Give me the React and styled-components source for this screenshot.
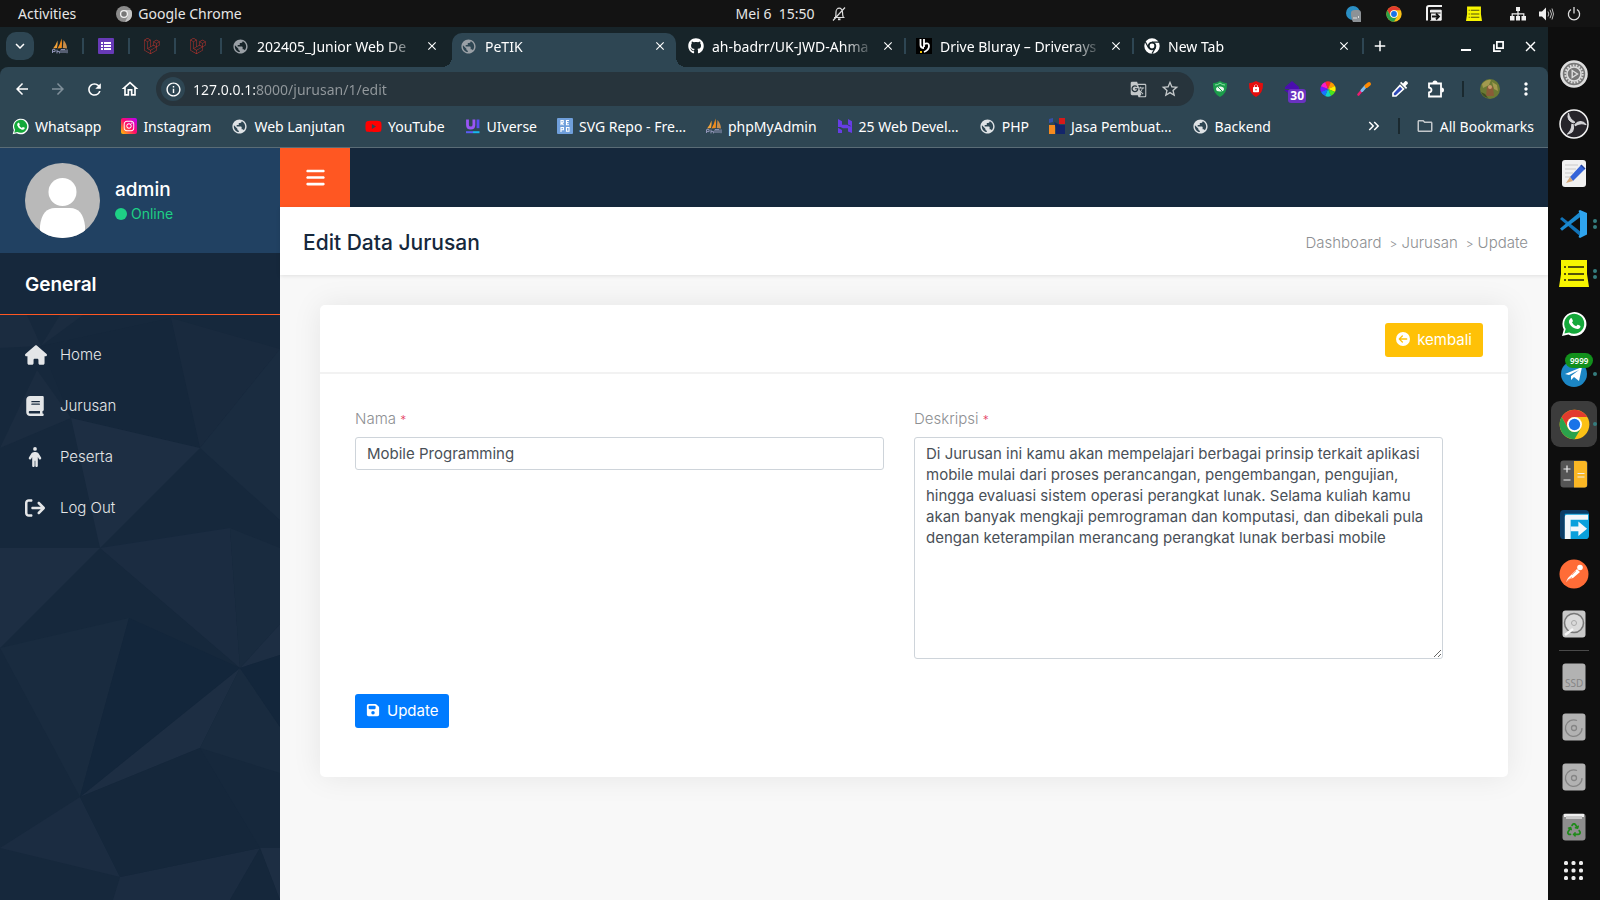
import React from 'react';
import styled, { createGlobalStyle } from 'styled-components';
import {
  FaArrowRightFromBracket,
  FaBars,
  FaBook,
  FaCircleArrowLeft,
  FaFloppyDisk,
  FaGithub,
  FaHouse,
  FaInstagram,
  FaPerson,
  FaRecycle,
  FaYoutube,
} from 'react-icons/fa6';
import {
  MdAdd,
  MdArrowBack,
  MdArrowForward,
  MdClose,
  MdGTranslate,
  MdInfoOutline,
  MdKeyboardArrowDown,
  MdKeyboardDoubleArrowRight,
  MdLock,
  MdMoreVert,
  MdOutlineFolder,
  MdOutlineHome,
  MdPublic,
  MdRefresh,
  MdStarBorder,
} from 'react-icons/md';
import { SiLaravel } from 'react-icons/si';

const description =
  'Di Jurusan ini kamu akan mempelajari berbagai prinsip terkait aplikasi mobile mulai dari proses perancangan, pengembangan, pengujian, hingga evaluasi sistem operasi perangkat lunak. Selama kuliah kamu akan banyak mengkaji pemrograman dan komputasi, dan dibekali pula dengan keterampilan merancang perangkat lunak berbasi mobile';

/* ---------- drawings ---------- */

function ChromeLogo({ size = 16 }) {
  return (
    <svg width={size} height={size} viewBox="0 0 48 48">
      <circle cx="24" cy="24" r="23" fill="#fbc116" />
      <path d="M4.1 12.5A23 23 0 0 1 43.9 12.5H24A11.5 11.5 0 0 0 14 29.8Z" fill="#e33b2e" />
      <path d="M4.1 12.5 14 29.8A11.5 11.5 0 0 0 34 29.8L24 47A23 23 0 0 1 4.1 12.5Z" fill="#2ba24c" />
      <circle cx="24" cy="24" r="11.5" fill="#fff" />
      <circle cx="24" cy="24" r="8.8" fill="#1a73e8" />
    </svg>
  );
}

function ChromeGray() {
  return (
    <svg width="16" height="16" viewBox="0 0 16 16">
      <circle cx="8" cy="8" r="8" fill="#8b8b8b" />
      <path d="M8 4h7a8 8 0 0 1-6 12l3-6z" fill="#c4c4c4" />
      <circle cx="8" cy="8" r="3.4" fill="#777" stroke="#f1f1f1" strokeWidth="1.3" />
    </svg>
  );
}

function ChromeMono() {
  return (
    <svg width="16" height="16" viewBox="0 0 16 16" fill="none" stroke="#fff">
      <circle cx="8" cy="8" r="6" strokeWidth="3.4" />
      <circle cx="8" cy="8" r="2.4" fill="#fff" stroke="none" />
      <path d="M8 4.2h7M4.7 10 1.4 4M11.3 10 8 15.6" stroke="#172429" strokeWidth="1.2" />
    </svg>
  );
}

function Sails() {
  return (
    <svg width="16" height="16" viewBox="0 0 16 16">
      <path d="M5.5 2.5Q4 7 1 10.5L5 10Q6 6 5.5 2.5Z" fill="#f2a33a" />
      <path d="M9.5.5Q8 7 5.5 10.5L9.8 10Q10.4 5 9.5.5Z" fill="#f08c1c" />
      <path d="M11.5 2Q15 6 15 10.5L10.8 10Z" fill="#c98d49" />
      <path d="M.5 15v-3.4h2.6v2H.6M5 15.4v-3.8M5 13.4h2.4v2M9 15v-3.4h2v3.4M11 11.6h2v3.4M15 11.4v3.8" fill="none" stroke="#9296b8" strokeWidth="1" />
    </svg>
  );
}

function FormsIcon() {
  return (
    <svg width="16" height="16" viewBox="0 0 16 16">
      <rect width="16" height="16" rx="1" fill="#673ab7" />
      <path d="M3 4h2v2H3zM6 4h7v2H6zM3 7h2v2H3zM6 7h7v2H6zM3 10h2v2H3zM6 10h7v2H6z" fill="#fff" />
    </svg>
  );
}

function BlurayIcon() {
  return (
    <svg width="16" height="16" viewBox="0 0 16 16">
      <rect width="16" height="16" fill="#000" />
      <path d="M4.5 1v6q0 3 3.5 3M8 1v8M8 6q5-2 5 2t-5 6" fill="none" stroke="#fff" strokeWidth="1.8" />
      <rect x="4" y="13" width="2" height="2" fill="#f7c600" />
    </svg>
  );
}

function UiverseIcon() {
  return (
    <svg width="16" height="16" viewBox="0 0 16 16" fill="none">
      <path d="M2.5 1.5v5.4q0 3.100 3.200 3.100t3.200-3.100V1.500" stroke="#9a55f5" strokeWidth="2.8" />
      <path d="M13 1.5v8.700" stroke="#5a4bf0" strokeWidth="2.8" />
      <path d="M1 14.200h7" stroke="#5a5cf5" strokeWidth="2" />
      <path d="M8 14.200h6.500" stroke="#19b7ee" strokeWidth="2" />
    </svg>
  );
}

function RepoIcon() {
  return (
    <svg width="16" height="16" viewBox="0 0 16 16">
      <rect width="16" height="16" rx="1" fill="#6f9fdb" />
      <path
        d="M4 7.200V2.500h2.200v2.300H4.500l2 2.400M12 2.500H9.500v4.200H12M9.500 4.600h2M4 14V9.500h2.400v2.300H4M9.500 9.500H12v3.800H9.500z"
        fill="none"
        stroke="#fff"
        strokeWidth="1.1"
      />
    </svg>
  );
}

function HIcon() {
  return (
    <svg width="16" height="16" viewBox="0 0 16 16" fill="#673de6">
      <path d="M1 7V1l4 2.2v3.6h5l4 2.2H1zM11 6.4V1l4 2.2V8.4zM1 15V9.8L5 12v3zM11 13.6v-3.400H6L2 8.200h13V15z" />
    </svg>
  );
}

function JasaIcon() {
  return (
    <svg width="16" height="16" viewBox="0 0 16 16">
      <path d="M0 1l4-1v4l-4 1z" fill="#3550a8" />
      <rect x="10" y="0" width="6" height="6" fill="#d61a1a" />
      <rect x="0" y="7" width="6" height="9" fill="#f78b1f" />
      <path d="M5 4l6 3h5v9H7v-6z" fill="#14266b" />
    </svg>
  );
}

function InstagramBadge() {
  return (
    <svg width="16" height="16" viewBox="0 0 16 16">
      <defs>
        <linearGradient id="ig" x1="0" y1="1" x2="1" y2="0">
          <stop offset="0" stopColor="#ffc800" />
          <stop offset="0.5" stopColor="#ff0a6c" />
          <stop offset="1" stopColor="#b400ff" />
        </linearGradient>
      </defs>
      <rect width="16" height="16" rx="2" fill="url(#ig)" />
      <FaInstagram x="2" y="2" size={12} color="#fff" />
    </svg>
  );
}

function WhatsappLogo({ size = 16 }) {
  return (
    <svg width={size} height={size} viewBox="0 0 26 26">
      <path d="M1 25l1.8-6.4A12 12 0 1 1 7.4 23.4z" fill="#fff" />
      <path d="M3.4 22.6l1.3-4.6A10 10 0 1 1 8.2 21.4z" fill="#14a83a" />
      <path
        d="M9.400 7.400q1-.8 1.600.4l.9 2q.2.6-.9 1.700 1.600 2.900 4.200 3.800l1.300-1.500q.4-.4 2.600.9.8.4.1 1.800-1.600 2.400-5 1.100-5-2-6.300-6.400-.2-2.400 1.500-3.800z"
        fill="#fff"
      />
    </svg>
  );
}

function MutedBell() {
  return (
    <svg width="14" height="14" viewBox="0 0 14 14" fill="none" stroke="#ddd" strokeWidth="1.2">
      <path d="M2 10.500h10.500M3.500 10.500Q4 8 4 5a3 3.500 0 0 1 6.500 0q0 3 .8 5.500M1 13.500 13 .5" />
      <path d="M6 12.300h2.500" strokeWidth="1.800" />
    </svg>
  );
}

function DownloadTray() {
  return (
    <svg width="16" height="17" viewBox="0 0 16 17" fill="none" stroke="#f2f2f2">
      <path d="M1 15.500V3q0-2 2-2h13" strokeWidth="2" />
      <path d="M4.500 5.200H15.200v10H4.500z" fill="#f2f2f2" strokeWidth="1" />
      <path d="M4.500 15V8h10" stroke="#131313" strokeWidth="1.200" />
      <path d="M6 11.500h6M10 8.500l3 3-3 3" stroke="#131313" strokeWidth="1.800" />
    </svg>
  );
}

function DownloadIcon() {
  return (
    <svg width="29" height="29" viewBox="0 0 30 30">
      <rect width="30" height="30" rx="4" fill="#0c3c66" />
      <path d="M5 4h25v22q0 4-4 4H5z" fill="#0aa0dc" />
      <path d="M5 30V7q0-2 2-2h22v5H11v20z" fill="#f4f7fa" />
      <path d="M11 17h8v-5l9 7.500-9 7.500v-5h-8z" fill="#f4f7fa" />
    </svg>
  );
}

function NotesIcon({ size = 14 }) {
  return (
    <svg width={size} height={size} viewBox="0 0 30 28">
      <path d="M2 0h26v14l2 13H0l2-13z" fill="#f7f500" />
      <path d="M5 7h2M9 7h16M5 14h2M9 14h16M5 20h2M9 20h16" stroke="#55530a" strokeWidth="2" />
    </svg>
  );
}

function NetworkIcon() {
  return (
    <svg width="16" height="14" viewBox="0 0 16 14" fill="#eee">
      <path d="M6 0h4v4H6zM0 9h4.500v4.500H0zM11.500 9H16v4.500h-4.500zM6 9h4v4.500H6z" />
      <path d="M8 4v5M2.200 9.500V6.800h11.600v2.700" fill="none" stroke="#eee" strokeWidth="1.200" />
    </svg>
  );
}

function VolumeIcon() {
  return (
    <svg width="15" height="14" viewBox="0 0 15 14" fill="#eee">
      <path d="M0 4.500h3L7 .5v13L3 9.500H0z" />
      <path d="M9 4.500q1.600 2.500 0 5M11 2.800q3 4.200 0 8.400M13 1.500q3 5.500 0 11" fill="none" stroke="#bbb" />
    </svg>
  );
}

function PowerIcon() {
  return (
    <svg width="14" height="14" viewBox="0 0 14 14" fill="none" stroke="#ddd" strokeWidth="1.300">
      <path d="M4 2.500a5.600 5.600 0 1 0 6 0M7 0v6.500" />
    </svg>
  );
}

function TrayApp() {
  return (
    <svg width="16" height="16" viewBox="0 0 16 16">
      <circle cx="7" cy="7" r="7" fill="#2b8fc4" />
      <path d="M5 7q0-3 4-3h3q3 0 3 3v9H7q-2-3-2-9z" fill="#8d9296" />
      <path d="M7 12h4M12.500 10v2" stroke="#ddd" />
    </svg>
  );
}

function Shield({ color, children }) {
  return (
    <svg width="16" height="16" viewBox="0 0 16 16">
      <path d="M8 0q3 2 7 2.200Q15.500 12 8 16 .5 12 1 2.200 5 2 8 0z" fill={color} />
      {children}
    </svg>
  );
}

function ColorWheel() {
  const colors = ['#ff2a2a', '#ff9900', '#ffee00', '#4be31c', '#12d6c4', '#1677ff', '#6a1cff', '#ff1cc4'];
  return (
    <svg width="16" height="16" viewBox="-8 -8 16 16">
      {colors.map((color, i) => (
        <path key={color} d="M0 0 3-7A7.500 7.500 0 0 0-3-7z" fill={color} transform={`rotate(${i * 45})`} />
      ))}
    </svg>
  );
}

function BrushIcon() {
  return (
    <svg width="16" height="16" viewBox="0 0 16 16" strokeLinecap="round">
      <path d="M2.500 13.500l3-3.500" stroke="#ee1c70" strokeWidth="2.600" />
      <path d="M6 9.500l3.500-4" stroke="#7fbef0" strokeWidth="3" />
      <path d="M10.500 5 13 3" stroke="#ff8a00" strokeWidth="4" />
    </svg>
  );
}

function PickerIcon() {
  return (
    <svg width="18" height="18" viewBox="0 0 18 18">
      <path d="M2 16v-3l7-7.500 3.500 3.500L5 16z" fill="#2f49b8" stroke="#fff" strokeWidth="1.700" />
      <path d="M9 3l6 6 1.200-1.200-1.700-1.800L17 3.500Q17 .8 14.300 1L12 3.500 10.200 1.800z" fill="#fff" />
    </svg>
  );
}

function PuzzleIcon() {
  return (
    <svg width="18" height="18" viewBox="0 0 18 18">
      <path d="M2 3.500h12v13H2v-4q2.500-.5 2.500-2.500T2 7.500z" fill="none" stroke="#fff" strokeWidth="1.800" />
      <path d="M5.500 3a2.500 2.500 0 0 1 5 0zM14.500 7.500a2.500 2.500 0 0 1 0 5z" fill="#fff" />
    </svg>
  );
}

function ProfilePhoto() {
  return (
    <svg width="20" height="20" viewBox="0 0 20 20">
      <circle cx="10" cy="10" r="10" fill="#6b7a34" />
      <path d="M2 5q5-5 9-4l-2 5-6 3zM12 3l5 3 1 6-4-2z" fill="#a39a4f" />
      <path d="M7 8q3-3 6 0l1 9H6z" fill="#8a5b38" />
      <path d="M1 13l4 2 3 4q-5-1-7-6z" fill="#3e4f22" />
      <circle cx="10" cy="8" r="2" fill="#c79a6c" />
    </svg>
  );
}

function CounterMark() {
  return (
    <svg width="18" height="18" viewBox="0 0 18 18" fill="#4a0eae">
      <path d="M9 1 16 7v2H2V7zM1 10h8v6z" />
    </svg>
  );
}

function GearIcon() {
  return (
    <svg width="28" height="28" viewBox="0 0 28 28" fill="none">
      <circle cx="14" cy="14" r="12.500" fill="#777" stroke="#dedede" strokeWidth="2.600" />
      <circle cx="14" cy="14" r="8.600" stroke="#ddd" strokeWidth="2" strokeDasharray="1.700 1.300" />
      <circle cx="14" cy="14" r="7" stroke="#ddd" strokeWidth="1.600" />
      <path d="M12.200 10.500 17.500 14l-5.300 3.500z" stroke="#ddd" strokeWidth="1.400" />
    </svg>
  );
}

function ObsIcon() {
  return (
    <svg width="30" height="30" viewBox="-15 -15 30 30">
      <circle r="14" fill="#26242a" stroke="#f2f2f2" strokeWidth="1.500" />
      {[0, 120, 240].map((angle) => (
        <path key={angle} d="M0-1Q-8-3-5.500-11-4.500-5 .8-2z" fill="#d5d5d8" stroke="#d5d5d8" transform={`rotate(${angle})`} />
      ))}
    </svg>
  );
}

function EditorIcon() {
  return (
    <svg width="26" height="28" viewBox="0 0 26 28">
      <rect x="1" y="0" width="24" height="27" rx="3" fill="#f1f1f1" />
      <path d="M4 5h13M4 9h11M4 13h8M4 17h6" stroke="#c9c9c9" strokeWidth="1.200" />
      <path d="M9 17 20 5l4 4-12 12z" fill="#3564d8" />
      <path d="M9 17l3 4-7 2z" fill="#d6a878" />
      <path d="M20 5l4 4" stroke="#1f3f9c" strokeWidth="1.500" />
    </svg>
  );
}

function VscodeIcon() {
  return (
    <svg width="28" height="28" viewBox="0 0 28 28">
      <path d="M0 9l2-2 19 15v5z" fill="#1173b8" />
      <path d="M0 18.500l2 2.200L21 6.500V1z" fill="#1b8ad0" />
      <path d="M20 0l7 3v21.500L20 28l-1.500-1 1.500-3V4l-1.500-3z" fill="#2fa4ee" />
    </svg>
  );
}

function TelegramIcon() {
  return (
    <svg width="28" height="28" viewBox="0 0 28 28">
      <circle cx="14" cy="14" r="13" fill="#1c86c4" />
      <path d="M5 14 22 7l-3 14-5-4-3 3v-4l8-6-10 5z" fill="#fff" />
    </svg>
  );
}

function CalculatorIcon() {
  return (
    <svg width="28" height="28" viewBox="0 0 28 28">
      <rect x="0.500" y="0.500" width="27" height="27" rx="3" fill="#555" />
      <path d="M14 1h10.500a2.500 2.500 0 0 1 2.500 2.500V25a2.500 2.500 0 0 1-2.500 2.500H14z" fill="#fbb724" />
      <path d="M3.500 9h7M7 5.500v7M3.500 20h7M17.500 13.500h7M17.500 17h7" stroke="#eee" strokeWidth="1.200" />
    </svg>
  );
}

function PostmanIcon() {
  return (
    <svg width="30" height="30" viewBox="0 0 30 30">
      <circle cx="15" cy="15" r="14.500" fill="#ff6c37" />
      <circle cx="21" cy="8.500" r="2.800" fill="#fff" />
      <path d="M11 17l7-7 3 3-7 6-4 1-3 3 2-4z" fill="#fff" />
      <path d="M7 23l6-5M17 12l-4 4" stroke="#ff9d78" strokeWidth="0.800" />
    </svg>
  );
}

function DiskIcon({ kind }) {
  return (
    <svg width="24" height="28" viewBox="0 0 24 28" fill="none">
      <rect x="0.500" y="0.500" width="23" height="27" rx="3" fill={kind === 'hdd' ? '#c9c9c9' : '#b2b2b2'} />
      {kind === 'hdd' && (
        <>
          <circle cx="12" cy="13" r="9.500" fill="#dadada" stroke="#777" strokeWidth="1.500" />
          <circle cx="12" cy="13" r="2.500" stroke="#aaa" />
          <path d="M3 25l8-6" stroke="#f6f6f6" strokeWidth="2.500" />
        </>
      )}
      {kind === 'ssd' && (
        <text x="3" y="24" fill="#858585" fontFamily="Noto Sans" fontSize="10">
          SSD
        </text>
      )}
      {kind === 'disc' && (
        <>
          <path d="M15 7.500A8.300 8.300 0 1 0 20 15" stroke="#858585" strokeWidth="1.300" />
          <circle cx="12" cy="15" r="2.500" stroke="#858585" strokeWidth="1.300" />
        </>
      )}
    </svg>
  );
}

function TrashIcon() {
  return (
    <svg width="24" height="28" viewBox="0 0 24 28">
      <rect x="0.500" y="0.500" width="23" height="27" rx="3" fill="#8e8e8e" />
      <path d="M2 1h20v3H2z" fill="#eee" />
      <path d="M4 3h16v3H4z" fill="#c9c9c9" />
      <FaRecycle x="5" y="10" size={14} color="#1f8a1a" />
    </svg>
  );
}

function AppsGrid() {
  return (
    <svg width="20" height="20" viewBox="0 0 20 20" fill="#eee">
      {[0, 7.5, 15].map((y) => [0, 7.5, 15].map((x) => <rect key={`${x}-${y}`} x={x} y={y} width="4" height="4" rx="1.5" />))}
    </svg>
  );
}

function RestoreIcon() {
  return (
    <svg width="11" height="11" viewBox="0 0 12 12" fill="none" stroke="#fff" strokeWidth="1.900">
      <path d="M4.200 1h6.800v6.800H4.200zM1 3.500V11h7.500" />
    </svg>
  );
}

function Facets() {
  return (
    <FacetSvg viewBox="0 315 280 585" preserveAspectRatio="xMinYMin slice" aria-hidden="true">
      <path d="M0 315H27L41 346 0 348ZM60 315H83L41 346ZM0 448 37 370 71 418Z" fill="#1b2c40" />
      <path d="M41 346 171 318 200 448 71 418Z" fill="#15273b" />
      <path d="M171 318 280 349 200 448Z" fill="#192a3e" />
      <path d="M200 448 280 349V520Z" fill="#1a2c40" />
      <path d="M71 418 200 448 100 548ZM0 548H100L0 648ZM240 668 280 624V655ZM240 668 80 797 200 748ZM260 848H280V900Z" fill="#1d2e43" />
      <path d="M100 548 230 528 240 668ZM80 797 0 848 120 877ZM120 877 260 848 230 900H113Z" fill="#1b2c41" />
      <path d="M230 528 280 548V624L240 668ZM0 648 129 618 80 797ZM240 668 280 727V773L200 748Z" fill="#192b3f" />
      <path d="M129 618 240 668 80 797ZM240 668 280 655V727Z" fill="#13263b" />
      <path d="M80 797 200 748 260 848 120 877ZM230 900 260 848 280 900Z" fill="#15273b" />
    </FacetSvg>
  );
}

/* ---------- data ---------- */

const pinned = [
  { name: 'phpMyAdmin', icon: <Sails /> },
  { name: 'Forms', icon: <FormsIcon /> },
  { name: 'Laravel', icon: <SiLaravel size={16} color="#c2332d" /> },
  { name: 'Laravel docs', icon: <SiLaravel size={16} color="#c2332d" /> },
];

const tabs = [
  { title: '202405_Junior Web De', icon: <MdPublic size={17} color="#9aa0a6" /> },
  { title: 'PeTIK', icon: <MdPublic size={17} color="#9aa0a6" />, active: true },
  { title: 'ah-badrr/UK-JWD-Ahma', icon: <FaGithub size={16} color="#fff" /> },
  { title: 'Drive Bluray – Driverays', icon: <BlurayIcon />, line: true },
  { title: 'New Tab', icon: <ChromeMono />, line: true },
];

const globe = <MdPublic size={17} color="#dfe3e6" />;

const bookmarks = [
  { label: 'Whatsapp', icon: <WhatsappLogo size={17} /> },
  { label: 'Instagram', icon: <InstagramBadge /> },
  { label: 'Web Lanjutan', icon: globe },
  { label: 'YouTube', icon: <FaYoutube size={17} color="#f00" /> },
  { label: 'UIverse', icon: <UiverseIcon /> },
  { label: 'SVG Repo - Fre…', icon: <RepoIcon /> },
  { label: 'phpMyAdmin', icon: <Sails /> },
  { label: '25 Web Devel…', icon: <HIcon /> },
  { label: 'PHP', icon: globe },
  { label: 'Jasa Pembuat…', icon: <JasaIcon /> },
  { label: 'Backend', icon: globe },
];

const menu = [
  { label: 'Home', icon: <FaHouse size={22} /> },
  { label: 'Jurusan', icon: <FaBook size={20} /> },
  { label: 'Peserta', icon: <FaPerson size={20} /> },
  { label: 'Log Out', icon: <FaArrowRightFromBracket size={20} /> },
];

const dockApps = [
  { name: 'Settings', icon: <GearIcon /> },
  { name: 'OBS Studio', icon: <ObsIcon /> },
  { name: 'Text Editor', icon: <EditorIcon /> },
  { name: 'Code', icon: <VscodeIcon />, dots: 2 },
  { name: 'Notes', icon: <NotesIcon size={30} />, dots: 2 },
  { name: 'WhatsApp', icon: <WhatsappLogo size={26} /> },
  { name: 'Telegram', icon: <TelegramIcon />, dots: 1, badge: '9999' },
  { name: 'Chrome', icon: <ChromeLogo size={31} />, dots: 1, active: true },
  { name: 'Calculator', icon: <CalculatorIcon /> },
  { name: 'Free Download Manager', icon: <DownloadIcon /> },
  { name: 'Postman', icon: <PostmanIcon /> },
  { name: 'Disks', icon: <DiskIcon kind="hdd" /> },
];

const dockDrives = [
  { name: 'SSD', icon: <DiskIcon kind="ssd" /> },
  { name: 'Volume 1', icon: <DiskIcon kind="disc" /> },
  { name: 'Volume 2', icon: <DiskIcon kind="disc" /> },
  { name: 'Trash', icon: <TrashIcon /> },
];

/* ---------- parts ---------- */

function SystemBar() {
  return (
    <SystemBarDiv>
      <SystemGroup>
        <SystemButton>Activities</SystemButton>
        <SystemButton>
          <ChromeGray />
          Google Chrome
        </SystemButton>
      </SystemGroup>
      <ClockButton>
        <span>Mei 6&nbsp; 15:50</span>
        <MutedBell />
      </ClockButton>
      <TrayDiv>
        <TrayApps>
          <TrayApp />
          <ChromeLogo size={16} />
          <DownloadTray />
          <NotesIcon size={16} />
        </TrayApps>
        <TrayStatus>
          <NetworkIcon />
          <VolumeIcon />
          <PowerIcon />
        </TrayStatus>
      </TrayDiv>
    </SystemBarDiv>
  );
}

function TabStrip() {
  return (
    <TabStripDiv>
      <TabSearch aria-label="Search tabs">
        <MdKeyboardArrowDown size={18} />
      </TabSearch>
      {pinned.map((tab) => (
        <PinnedTab key={tab.name} aria-label={tab.name}>
          {tab.icon}
        </PinnedTab>
      ))}
      {tabs.map((tab) => (
        <TabDiv key={tab.title} $active={tab.active} $line={tab.line}>
          <TabButton>
            {tab.icon}
            <TabTitle>{tab.title}</TabTitle>
          </TabButton>
          <IconButton $size={18} aria-label={`Close ${tab.title}`}>
            <MdClose size={14} />
          </IconButton>
        </TabDiv>
      ))}
      <NewTabLine />
      <IconButton $size={32} aria-label="New tab">
        <MdAdd size={18} />
      </IconButton>
      <WindowControls>
        <IconButton $size={32} aria-label="Minimize">
          <MinimizeMark />
        </IconButton>
        <IconButton $size={32} aria-label="Restore">
          <RestoreIcon />
        </IconButton>
        <IconButton $size={32} aria-label="Close window">
          <MdClose size={17} />
        </IconButton>
      </WindowControls>
    </TabStripDiv>
  );
}

function Toolbar() {
  return (
    <ToolbarDiv>
      <NavButtons>
        <IconButton $size={36} aria-label="Back">
          <MdArrowBack size={18} />
        </IconButton>
        <IconButton $size={36} $dim aria-label="Forward">
          <MdArrowForward size={18} />
        </IconButton>
        <IconButton $size={36} aria-label="Reload">
          <MdRefresh size={19} />
        </IconButton>
        <IconButton $size={36} aria-label="Home page">
          <MdOutlineHome size={20} />
        </IconButton>
      </NavButtons>
      <Omnibox>
        <SiteInfo aria-label="Site information">
          <MdInfoOutline size={17} />
        </SiteInfo>
        <UrlInput aria-label="Address" defaultValue="127.0.0.1:8000/jurusan/1/edit" />
        <IconButton $size={32} $soft aria-label="Translate">
          <MdGTranslate size={17} />
        </IconButton>
        <IconButton $size={32} $soft aria-label="Bookmark">
          <MdStarBorder size={20} />
        </IconButton>
      </Omnibox>
      <Extensions>
        <IconButton $size={36} aria-label="Blocker">
          <Shield color="#1b9c4b">
            <path d="M3 4q3 0 5-2 2 2 5 2" stroke="#8ae0a4" fill="none" />
            <ellipse cx="8" cy="8" rx="4" ry="2.5" fill="#e7f7ec" />
            <path d="M6 6l4 4" stroke="#1b9c4b" />
          </Shield>
        </IconButton>
        <IconButton $size={36} aria-label="Lock">
          <Shield color="#e40d0d">
            <MdLock x="3.5" y="3" size={9} color="#fff" />
          </Shield>
        </IconButton>
        <IconButton $size={36} aria-label="Counter">
          <CounterMark />
          <CountBadge>30</CountBadge>
        </IconButton>
        <IconButton $size={36} aria-label="Colors">
          <ColorWheel />
        </IconButton>
        <IconButton $size={36} aria-label="Brush">
          <BrushIcon />
        </IconButton>
        <IconButton $size={36} aria-label="Picker">
          <PickerIcon />
        </IconButton>
        <IconButton $size={36} aria-label="Extensions">
          <PuzzleIcon />
        </IconButton>
      </Extensions>
      <BarLine />
      <IconButton $size={36} aria-label="Profile">
        <ProfilePhoto />
      </IconButton>
      <IconButton $size={36} aria-label="Menu">
        <MdMoreVert size={20} />
      </IconButton>
    </ToolbarDiv>
  );
}

function Bookmarks() {
  return (
    <BookmarksNav aria-label="Bookmarks">
      {bookmarks.map((item) => (
        <BookmarkLink key={item.label} href="#">
          {item.icon}
          {item.label}
        </BookmarkLink>
      ))}
      <BookmarksEnd>
        <IconButton $size={16} aria-label="More bookmarks">
          <MdKeyboardDoubleArrowRight size={18} />
        </IconButton>
        <BarLine />
        <BookmarkLink href="#">
          <MdOutlineFolder size={18} color="#c3c8cb" />
          All Bookmarks
        </BookmarkLink>
      </BookmarksEnd>
    </BookmarksNav>
  );
}

function Sidebar() {
  return (
    <SidebarAside>
      <UserDiv>
        <Avatar viewBox="0 0 75 75">
          <clipPath id="round">
            <circle cx="37.5" cy="37.5" r="37.5" />
          </clipPath>
          <g clipPath="url(#round)">
            <rect width="75" height="75" fill="#b9b9b9" />
            <circle cx="37.5" cy="29" r="14" fill="#fff" />
            <path d="M15 75V63q2-18 15-18h15q13 0 15 18v12z" fill="#fff" />
          </g>
        </Avatar>
        <UserText>
          <UserName>admin</UserName>
          <Status>
            <StatusDot />
            Online
          </Status>
        </UserText>
      </UserDiv>
      <SectionTitle>General</SectionTitle>
      <MenuNav aria-label="General">
        <Facets />
        {menu.map((item) => (
          <MenuLink key={item.label} href="#">
            <MenuIcon>{item.icon}</MenuIcon>
            {item.label}
          </MenuLink>
        ))}
      </MenuNav>
    </SidebarAside>
  );
}

function EditForm() {
  return (
    <Card>
      <CardHeader>
        <ActionButton $color="#ffc107">
          <FaCircleArrowLeft size={14} />
          kembali
        </ActionButton>
      </CardHeader>
      <Form onSubmit={(e) => e.preventDefault()}>
        <Field>
          <Label htmlFor="nama">
            Nama <Required>*</Required>
          </Label>
          <TextInput id="nama" defaultValue="Mobile Programming" />
        </Field>
        <Field>
          <Label htmlFor="deskripsi">
            Deskripsi <Required>*</Required>
          </Label>
          <TextArea id="deskripsi" rows={10} spellCheck={false} defaultValue={description} />
        </Field>
        <ActionButton $color="#007bff" type="submit">
          <FaFloppyDisk size={14} />
          Update
        </ActionButton>
      </Form>
    </Card>
  );
}

function Dock() {
  return (
    <DockNav aria-label="Dock">
      {dockApps.map((app) => (
        <DockItem key={app.name} aria-label={app.name} $active={app.active}>
          {app.icon}
          {app.badge && <DockBadge>{app.badge}</DockBadge>}
          {app.dots && (
            <Dots>
              {Array.from({ length: app.dots }, (_, i) => (
                <Dot key={i} />
              ))}
            </Dots>
          )}
        </DockItem>
      ))}
      <DockLine />
      {dockDrives.map((app) => (
        <DockItem key={app.name} aria-label={app.name}>
          {app.icon}
        </DockItem>
      ))}
      <AppsButton aria-label="Show applications">
        <AppsGrid />
      </AppsButton>
    </DockNav>
  );
}

function App() {
  return (
    <Desktop>
      <GlobalStyle />
      <SystemBar />
      <Workspace>
        <Browser>
          <TabStrip />
          <Toolbar />
          <Bookmarks />
          <Site>
            <Sidebar />
            <Main>
              <Topbar>
                <MenuToggle aria-label="Toggle menu">
                  <FaBars size={21} />
                </MenuToggle>
              </Topbar>
              <TitleBar>
                <Title>Edit Data Jurusan</Title>
                <Crumbs aria-label="Breadcrumb">
                  <CrumbLink href="#">Dashboard</CrumbLink>
                  <CrumbLink href="#">Jurusan</CrumbLink>
                  <CrumbLink href="#">Update</CrumbLink>
                </Crumbs>
              </TitleBar>
              <EditForm />
            </Main>
          </Site>
        </Browser>
        <Dock />
      </Workspace>
    </Desktop>
  );
}

export default App;

/* ---------- styles ---------- */

const GlobalStyle = createGlobalStyle`
  * {
    box-sizing: border-box;
  }
  body {
    margin: 0;
    background: #0e0e0e;
  }
  button {
    border: 0;
    padding: 0;
    background: none;
    color: inherit;
    font: inherit;
  }
  a {
    color: inherit;
    text-decoration: none;
  }
  svg {
    flex: none;
  }
`;

const Desktop = styled.div`
  display: flex;
  flex-direction: column;
  min-height: 100vh;
  font-family: 'Noto Sans', sans-serif;
  font-size: 14px;
  color: #fff;
`;

const SystemBarDiv = styled.header`
  display: grid;
  grid-template-columns: 1fr auto 1fr;
  align-items: center;
  height: 27px;
  background: #131313;
  color: #e6e6e6;
`;

const SystemGroup = styled.div`
  display: flex;
  gap: 40px;
  padding-left: 18px;
`;

const SystemButton = styled.button`
  display: flex;
  align-items: center;
  gap: 6px;
`;

const ClockButton = styled.button`
  display: flex;
  align-items: center;
  gap: 18px;
  padding-right: 18px;
`;

const TrayDiv = styled.div`
  display: flex;
  justify-content: flex-end;
  align-items: center;
  gap: 28px;
  padding-right: 19px;
`;

const TrayApps = styled.div`
  display: flex;
  align-items: center;
  gap: 24px;
`;

const TrayStatus = styled.div`
  display: flex;
  align-items: center;
  gap: 13px;
`;

const Workspace = styled.div`
  display: flex;
  flex: 1;
`;

const Browser = styled.div`
  display: flex;
  flex: 1;
  flex-direction: column;
  min-width: 0;
  background: #172429;
`;

const TabStripDiv = styled.div`
  display: flex;
  align-items: center;
  height: 40px;
  padding: 0 0 2px 6px;
`;

const TabSearch = styled.button`
  display: grid;
  place-items: center;
  width: 28px;
  height: 28px;
  margin-right: 4px;
  border-radius: 10px;
  background: #2e4653;
`;

const PinnedTab = styled.button`
  display: grid;
  place-items: center;
  width: 46px;
  height: 16px;
  border-right: 2px solid #2e4653;
`;

const TabDiv = styled.div`
  display: flex;
  position: relative;
  align-items: center;
  align-self: ${(props) => (props.$active ? 'flex-end' : 'center')};
  flex: 0 1 ${(props) => (props.$active ? '224px' : '228px')};
  min-width: 0;
  height: ${(props) => (props.$active ? '34px' : '28px')};
  padding: ${(props) => (props.$active ? '0 7px 8px 8px' : '0 9px 0 10px')};
  margin: ${(props) => (props.$active ? '0 2px -2px' : '0')};
  border-radius: 10px 10px 0 0;
  background: ${(props) => (props.$active ? '#2e4653' : 'none')};

  &::before,
  &::after {
    content: '';
    display: ${(props) => (props.$active ? 'block' : 'none')};
    position: absolute;
    bottom: 0;
    width: 10px;
    height: 10px;
  }
  &::before {
    right: 100%;
    background: radial-gradient(circle at 0 0, transparent 10px, #2e4653 10px);
  }
  &::after {
    left: 100%;
    background: radial-gradient(circle at 100% 0, transparent 10px, #2e4653 10px);
  }

  ${(props) =>
    props.$line &&
    `
    height: 16px;
    border-radius: 0;
    box-shadow: -2px 0 #2e4653;
  `}
`;

const TabButton = styled.button`
  display: flex;
  flex: 1;
  align-items: center;
  gap: 8px;
  min-width: 0;
`;

const TabTitle = styled.span`
  flex: 1;
  overflow: hidden;
  text-align: left;
  white-space: nowrap;
  mask-image: linear-gradient(to left, transparent 4px, #000 36px);
`;

const NewTabLine = styled.span`
  width: 2px;
  height: 16px;
  background: #2e4653;
`;

const IconButton = styled.button`
  display: inline-flex;
  position: relative;
  flex: none;
  align-items: center;
  justify-content: center;
  width: ${(props) => props.$size}px;
  height: ${(props) => props.$size}px;
  color: ${(props) => (props.$dim ? '#80909a' : props.$soft ? '#c4c8ca' : '#fff')};
`;

const WindowControls = styled.div`
  display: flex;
  margin-left: auto;
  padding-right: 2px;
`;

const MinimizeMark = styled.span`
  width: 10px;
  height: 2px;
  margin-top: 8px;
  background: #fff;
`;

const ToolbarDiv = styled.div`
  display: flex;
  align-items: center;
  height: 46px;
  padding: 0 4px 2px;
  border-radius: 8px 8px 0 0;
  background: #2e4653;
`;

const NavButtons = styled.div`
  display: flex;
  margin-right: 8px;
`;

const Omnibox = styled.div`
  display: flex;
  flex: 1;
  align-items: center;
  height: 34px;
  min-width: 0;
  padding: 0 8px 0 5px;
  border-radius: 17px;
  background: #27343c;
`;

const SiteInfo = styled.button`
  display: grid;
  place-items: center;
  width: 24px;
  height: 24px;
  border-radius: 50%;
  background: #2e4653;
`;

/* host is bright, port and path are dimmed */
const UrlInput = styled.input`
  flex: 1;
  min-width: 0;
  height: 24px;
  margin-left: 8px;
  padding: 0;
  border: 0;
  outline: 0;
  font: inherit;
  color: #fff;
  background: linear-gradient(to right, #fff 62px, #93999d 62px);
  background-clip: text;
  -webkit-text-fill-color: transparent;
`;

const Extensions = styled.div`
  display: flex;
  margin-left: 8px;
`;

const CountBadge = styled.span`
  position: absolute;
  right: 4px;
  bottom: 4px;
  padding: 0 2px;
  border-radius: 3px;
  background: #6a32c0;
  font-size: 12px;
  font-weight: 700;
  line-height: 14px;
`;

const BarLine = styled.span`
  width: 2px;
  height: 16px;
  margin: 0 8px;
  background: #1a292f;
`;

const BookmarksNav = styled.nav`
  display: flex;
  align-items: center;
  gap: 20px;
  height: 35px;
  padding: 0 14px 8px 12px;
  border-bottom: 1px solid #5a6c76;
  background: #2e4653;
  overflow: hidden;
`;

const BookmarkLink = styled.a`
  display: flex;
  align-items: center;
  gap: 6px;
  white-space: nowrap;
`;

const BookmarksEnd = styled.div`
  display: flex;
  align-items: center;
  gap: 8px;
  margin-left: auto;
`;

const Site = styled.div`
  display: flex;
  flex: 1;
  font-family: Inter, sans-serif;
`;

const SidebarAside = styled.aside`
  display: flex;
  flex: none;
  flex-direction: column;
  width: 280px;
  background: #16283c;
`;

const UserDiv = styled.div`
  display: flex;
  align-items: center;
  gap: 15px;
  padding: 15px 25px;
  background: #214162;
`;

const Avatar = styled.svg`
  width: 75px;
  height: 75px;
`;

const UserText = styled.div`
  padding-top: 3px;
`;

const UserName = styled.div`
  font-size: 19px;
  font-weight: 500;
  line-height: 24px;
`;

const Status = styled.div`
  display: flex;
  align-items: center;
  gap: 4px;
  font-size: 14px;
  line-height: 24px;
  color: #1ed085;
`;

const StatusDot = styled.span`
  width: 12px;
  height: 12px;
  border-radius: 50%;
  background: currentColor;
`;

const SectionTitle = styled.h2`
  margin: 0;
  padding: 21px 25px 19px;
  border-bottom: 1px solid #ff5722;
  font-size: 19px;
  font-weight: 600;
  line-height: 21px;
`;

const MenuNav = styled.nav`
  position: relative;
  flex: 1;
  padding-top: 14px;
  overflow: hidden;
`;

const FacetSvg = styled.svg`
  position: absolute;
  inset: 0;
  width: 100%;
  height: 100%;
`;

const MenuLink = styled.a`
  display: flex;
  position: relative;
  align-items: center;
  height: 51px;
  padding: 0 25px;
  font-size: 15px;
  font-weight: 300;
  color: #e4e6e8;
`;

const MenuIcon = styled.span`
  display: flex;
  width: 35px;
`;

const Main = styled.main`
  flex: 1;
  min-width: 0;
  background: #f8f8f8;
`;

const Topbar = styled.div`
  height: 59px;
  background: #15283c;
`;

const MenuToggle = styled.button`
  display: grid;
  place-items: center;
  width: 70px;
  height: 100%;
  background: #ff5722;
`;

const TitleBar = styled.div`
  display: flex;
  align-items: center;
  justify-content: space-between;
  height: 68px;
  padding: 3px 20px 0 23px;
  background: #fff;
  box-shadow: 0 1px 4px rgba(0, 0, 0, 0.1);
`;

const Title = styled.h1`
  margin: 0;
  font-size: 21px;
  font-weight: 500;
  color: #15283c;
`;

const Crumbs = styled.nav`
  display: flex;
  gap: 8px;
  font-size: 15px;
  font-weight: 300;
  color: #8d8f92;
`;

const CrumbLink = styled.a`
  & + &::before {
    content: '>';
    margin-right: 4px;
    font-size: 12px;
  }
`;

const Card = styled.section`
  margin: 30px 40px;
  border-radius: 5px;
  background: #fff;
  box-shadow: 0 0 30px rgba(0, 0, 0, 0.08);
`;

const CardHeader = styled.div`
  display: flex;
  justify-content: flex-end;
  padding: 18px 25px 15px;
  border-bottom: 2px solid #f2f2f2;
`;

const ActionButton = styled.button`
  display: inline-flex;
  align-items: center;
  justify-content: center;
  justify-self: start;
  gap: 7px;
  height: 34px;
  padding: 0 11px 2px;
  border-radius: 3px;
  background: ${(props) => props.$color};
  font-size: 15px;
  color: #fff;
`;

const Form = styled.form`
  display: grid;
  grid-template-columns: 1fr 1fr;
  gap: 35px 30px;
  padding: 34px 65px 49px 35px;
`;

const Field = styled.div`
  display: flex;
  flex-direction: column;
  align-items: stretch;
`;

const Label = styled.label`
  margin-bottom: 7px;
  font-size: 15px;
  font-weight: 300;
  line-height: 21px;
  color: #8d8f92;
`;

const Required = styled.span`
  font-size: 12px;
  color: #e4405f;
`;

const TextInput = styled.input`
  height: 33px;
  padding: 0 11px;
  border: 1px solid #ced4da;
  border-radius: 3px;
  outline: 0;
  background: #fff;
  font: inherit;
  font-size: 15px;
  color: #495057;
`;

const TextArea = styled.textarea`
  padding: 5px 11px;
  border: 1px solid #ced4da;
  border-radius: 3px;
  outline: 0;
  background: #fff;
  font: inherit;
  font-size: 15px;
  line-height: 21px;
  color: #495057;
  resize: vertical;
`;

const DockNav = styled.nav`
  display: flex;
  flex: none;
  flex-direction: column;
  align-items: center;
  width: 52px;
  padding-top: 22px;
  background: #0e0e0e;
`;

const DockItem = styled.button`
  display: grid;
  position: relative;
  place-items: center;
  width: 46px;
  height: 46px;
  margin: 2px 0;
  border-radius: 9px;
  background: ${(props) => (props.$active ? '#3c3c3c' : 'none')};
`;

const DockBadge = styled.span`
  position: absolute;
  top: 2px;
  left: 14px;
  padding: 0 5px;
  border-radius: 8px;
  background: #12901c;
  font-size: 8px;
  font-weight: 600;
  line-height: 15px;
`;

const Dots = styled.span`
  display: flex;
  position: absolute;
  right: 0;
  flex-direction: column;
  gap: 2px;
`;

const Dot = styled.span`
  width: 4px;
  height: 4px;
  border-radius: 50%;
  background: #357c7e;
`;

const DockLine = styled.span`
  width: 30px;
  height: 1px;
  margin: 1px 0;
  background: #4a4a4a;
`;

const AppsButton = styled.button`
  display: grid;
  place-items: center;
  width: 46px;
  height: 38px;
`;
